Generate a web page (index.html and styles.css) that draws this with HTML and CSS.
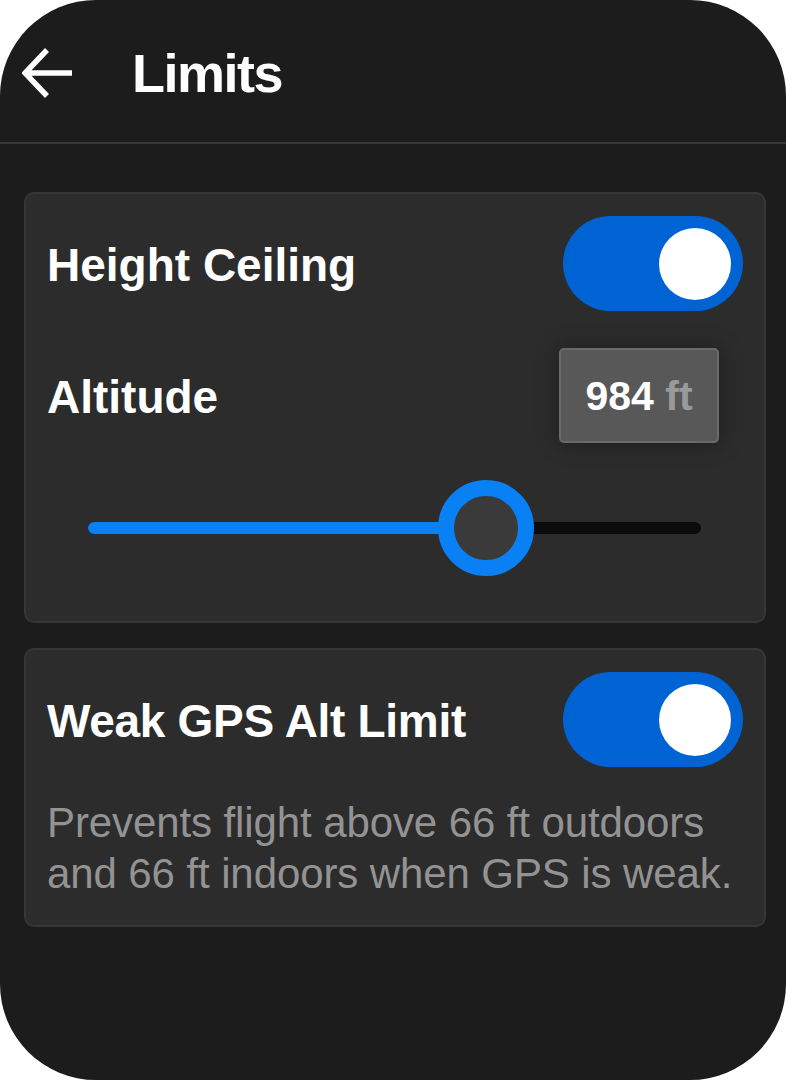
FILE: index.html
```html
<!DOCTYPE html>
<html lang="en">
<head>
<meta charset="utf-8">
<title>Limits</title>
<link rel="stylesheet" href="styles.css">
</head>
<body>
<div class="phone">
  <header class="header">
    <svg class="back" width="52" height="50" viewBox="0 0 52 50" aria-hidden="true">
      <path d="M25 2 L3 25 L25 48 M3 25 H50" fill="none" stroke="#ffffff" stroke-width="5.5" stroke-linejoin="miter"/>
    </svg>
    <h1 class="title">Limits</h1>
  </header>
  <main class="content">
    <section class="card card-height">
      <div class="row">
        <span class="label">Height Ceiling</span>
        <div class="toggle"><span class="knob"></span></div>
      </div>
      <div class="row row-alt">
        <span class="label">Altitude</span>
        <div class="value-box"><span class="value"><span class="num">984</span> <span class="unit">ft</span></span></div>
      </div>
      <div class="slider">
        <div class="track">
          <div class="fill" style="width: 65%"></div>
          <div class="thumb" style="left: 65%"></div>
        </div>
      </div>
    </section>
    <section class="card card-gps">
      <div class="row">
        <span class="label label-tight">Weak GPS Alt Limit</span>
        <div class="toggle"><span class="knob"></span></div>
      </div>
      <p class="desc">Prevents flight above 66 ft outdoors and 66 ft indoors when GPS is weak.</p>
    </section>
  </main>
</div>
</body>
</html>
```

FILE: styles.css
```css
* { box-sizing: border-box; }

html, body {
  margin: 0;
  padding: 0;
  background: #ffffff;
}

body {
  font-family: "Liberation Sans", Arial, sans-serif;
  color: #ffffff;
}

.phone {
  width: 786px;
  height: 1080px;
  background: #1c1c1c;
  border-radius: 96px;
  overflow: hidden;
}

.header {
  height: 144px;
  display: flex;
  align-items: center;
  padding: 3px 0 0 22px;
  border-bottom: 2px solid #393939;
}

.back {
  display: block;
  flex: none;
}

.title {
  margin: 0 0 0 58px;
  font-size: 54px;
  font-weight: 700;
  letter-spacing: -1.5px;
  line-height: 1;
}

.content {
  padding: 48px 20px 0 24px;
}

.card {
  background: #2c2c2c;
  border: 2px solid #363636;
  border-radius: 10px;
  padding: 22px 21px 0 21px;
}

.card-height {
  padding-bottom: 45px;
}

.card-gps {
  margin-top: 25px;
  padding-bottom: 26px;
}

.row {
  display: flex;
  align-items: center;
  justify-content: space-between;
}

.label {
  font-size: 46px;
  font-weight: 700;
  letter-spacing: 0;
  line-height: 1;
  padding-top: 3px;
}

.label-tight {
  letter-spacing: -0.3px;
}

.toggle {
  width: 180px;
  height: 95px;
  border-radius: 48px;
  background: #0063d4;
  display: flex;
  align-items: center;
  justify-content: flex-end;
  padding-right: 12px;
  flex: none;
}

.knob {
  width: 72px;
  height: 72px;
  border-radius: 50%;
  background: #ffffff;
}

.row-alt {
  margin-top: 37px;
  height: 95px;
}

.value-box {
  width: 160px;
  height: 95px;
  margin-right: 24px;
  background: #585858;
  border: 2px solid #6a6a6a;
  border-radius: 5px;
  box-shadow: 0 0 22px rgba(0, 0, 0, 0.35);
  display: flex;
  align-items: center;
  justify-content: center;
  font-size: 41px;
  font-weight: 700;
}

.value {
  white-space: nowrap;
  padding-top: 2px;
}

.num { color: #ffffff; }
.unit { color: #9a9a9a; }

.slider {
  margin-top: 37px;
  height: 96px;
  padding: 0 42px 0 41px;
  display: flex;
  align-items: center;
}

.track {
  position: relative;
  width: 100%;
  height: 12px;
  border-radius: 6px;
  background: #0b0b0b;
}

.fill {
  height: 100%;
  border-radius: 6px 0 0 6px;
  background: #0a80f5;
}

.thumb {
  position: absolute;
  top: 50%;
  width: 96px;
  height: 96px;
  margin: -48px 0 0 -48px;
  border-radius: 50%;
  border: 16px solid #0a80f5;
  background: #3a3a3a;
}

.desc {
  margin: 30px 0 0 0;
  font-size: 42px;
  line-height: 51px;
  letter-spacing: -0.1px;
  color: #939393;
}
```
